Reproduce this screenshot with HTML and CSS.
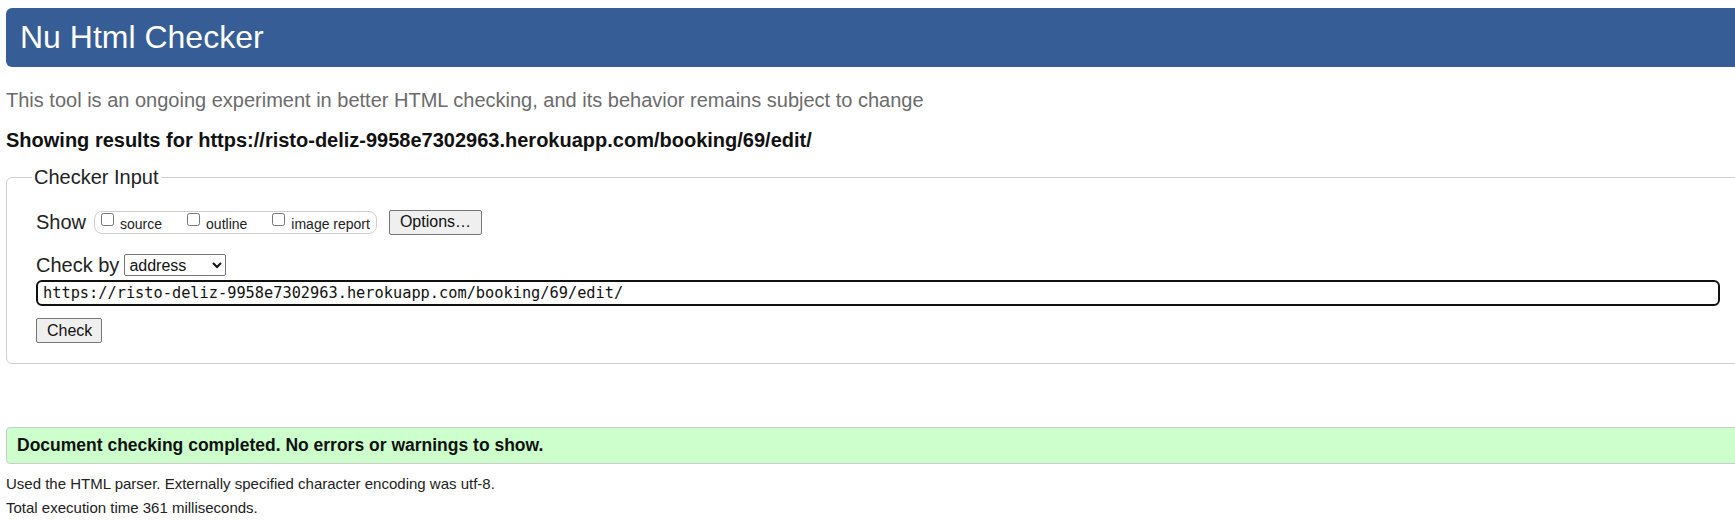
FILE: index.html
```html
<!DOCTYPE html>
<html lang="en">
<head>
<meta charset="utf-8">
<title>Nu Html Checker</title>
<link rel="stylesheet" href="styles.css">
</head>
<body>
<div class="page">
  <h1 class="title">Nu Html Checker</h1>
  <p class="tagline">This tool is an ongoing experiment in better HTML checking, and its behavior remains subject to change</p>
  <p class="showing">Showing results for https://risto-deliz-9958e7302963.herokuapp.com/booking/69/edit/</p>
  <fieldset class="input-box">
    <legend class="legend">Checker Input</legend>
    <div class="row show-row">
      <span class="row-label">Show</span>
      <span class="opts">
        <label class="opt"><input type="checkbox" class="cb"><span>source</span></label>
        <label class="opt"><input type="checkbox" class="cb"><span>outline</span></label>
        <label class="opt"><input type="checkbox" class="cb"><span>image report</span></label>
      </span>
      <button class="btn options-btn" type="button">Options…</button>
    </div>
    <div class="row by-row">
      <span class="row-label">Check by</span>
      <select class="sel"><option>address</option></select>
    </div>
    <input class="url" type="text" value="https://risto-deliz-9958e7302963.herokuapp.com/booking/69/edit/">
    <div class="submit-row">
      <button class="btn check-btn" type="button">Check</button>
    </div>
  </fieldset>
  <div class="success">Document checking completed. No errors or warnings to show.</div>
  <p class="info first">Used the HTML parser. Externally specified character encoding was utf-8.</p>
  <p class="info">Total execution time 361 milliseconds.</p>
</div>
</body>
</html>
```
FILE: styles.css
```css
html, body {
  margin: 0;
  padding: 0;
  overflow: hidden;
  background: #ffffff;
}
body {
  padding: 8px 0 0 6px;
  font-family: "Liberation Sans", Arial, sans-serif;
  font-size: 20px;
  color: #111;
}
.page {
  width: 1780px;
}
.title {
  margin: 0;
  height: 59px;
  line-height: 59px;
  padding-left: 14px;
  font-size: 32px;
  font-weight: normal;
  color: #ffffff;
  background: #365d95;
  border-radius: 6px;
}
.tagline {
  margin: 22px 0 0;
  line-height: 23px;
  color: #6b6b6b;
}
.showing {
  margin: 17px 0 0;
  line-height: 23px;
  font-weight: bold;
  color: #111;
}
.input-box {
  margin: 14px 0 0;
  padding: 0 0 20px 29px;
  border: 1px solid #cfcfcf;
  border-radius: 6px;
}
.legend {
  margin-left: -4px;
  padding: 0 2px;
  line-height: 23px;
  color: #222;
}
.row {
  display: flex;
  align-items: center;
  height: 24px;
}
.show-row {
  margin-top: 21px;
}
.by-row {
  margin-top: 19px;
}
.row-label {
  color: #222;
  margin-right: 8px;
}
.by-row .row-label {
  margin-right: 5px;
}
.opts {
  display: inline-flex;
  align-items: flex-start;
  box-sizing: border-box;
  height: 23px;
  padding: 0 6px 0 6px;
  border: 1px solid #cfcfcf;
  border-radius: 8px;
  gap: 25px;
}
.opt {
  display: inline-flex;
  align-items: flex-start;
  font-size: 14px;
  line-height: 20px;
  color: #222;
}
.opt span {
  padding-top: 2px;
}
.cb {
  width: 13px;
  height: 13px;
  margin: 1px 6px 0 0;
}
.btn {
  font-family: "Liberation Sans", Arial, sans-serif;
  font-size: 16px;
  color: #111;
  height: 24px;
  padding: 0 10px;
  background: #efefef;
  border: 1px solid #767676;
  border-radius: 2px;
}
.options-btn {
  margin-left: 12px;
  width: 93px;
  height: 25px;
}
.sel {
  font-family: "Liberation Sans", Arial, sans-serif;
  font-size: 16px;
  width: 102px;
  height: 22px;
  color: #111;
  background: #fff;
  border: 1px solid #767676;
  border-radius: 2px;
}
.url {
  display: block;
  box-sizing: border-box;
  width: 1684px;
  height: 26px;
  margin: 3px 0 0;
  padding: 0 5px;
  font-family: "DejaVu Sans Mono", "Liberation Mono", monospace;
  font-size: 15.3px;
  color: #111;
  border: 2px solid #101010;
  border-radius: 6px;
  outline: none;
}
.submit-row {
  margin-top: 12px;
  display: flex;
}
.check-btn {
  width: 66px;
  height: 25px;
}
.success {
  margin-top: 63px;
  height: 37px;
  box-sizing: border-box;
  line-height: 35px;
  padding-left: 10px;
  font-size: 17.5px;
  font-weight: bold;
  color: #111;
  background: #ccffcc;
  border: 1px solid #cccccc;
  border-radius: 4px;
}
.info {
  margin: 0;
  font-size: 15px;
  line-height: 24px;
  color: #222;
}
.info.first {
  margin-top: 8px;
}
```
